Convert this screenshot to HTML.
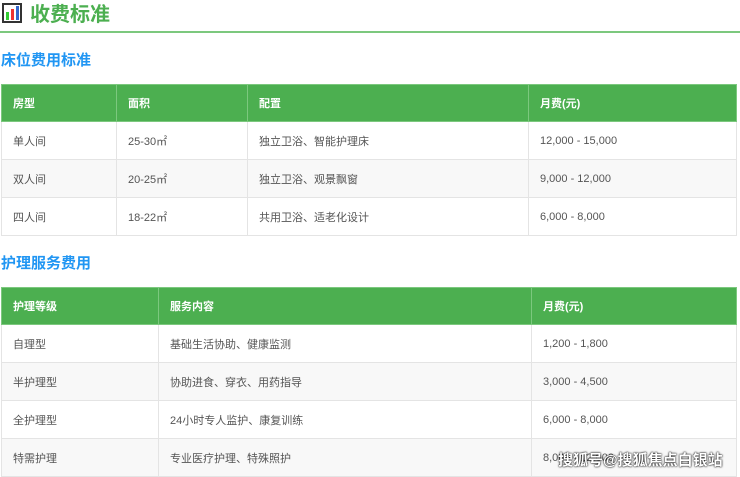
<!DOCTYPE html>
<html><head><meta charset="utf-8"><style>
*{margin:0;padding:0;box-sizing:border-box}
body{width:740px;height:476px;overflow:hidden;background:#fff;font-family:"Liberation Sans","Noto Sans CJK SC",sans-serif;color:#555;position:relative}
.title{position:absolute;left:2px;top:0;height:25px;display:flex;align-items:center;font-size:20px;font-weight:bold;color:#4caf50}
.icon{width:20px;height:20px;border:2px solid #333;background:#fff;margin-right:8px;position:relative}
.icon i{position:absolute;bottom:1px;width:3px}
.line{position:absolute;left:0;top:31px;width:740px;height:2px;background:#7cc87e}
h3{position:absolute;left:1px;font-size:15px;font-weight:bold;color:#2196f3}
table{position:absolute;left:1px;width:736px;border-collapse:collapse;font-size:11px}
td,th{border:1px solid #e4e4e4;padding-left:11px;text-align:left;height:38px}
th{background:#4caf50;color:#fff;font-weight:bold;height:37px;border-color:#7cc87e}
tr:nth-child(odd) td{background:#f8f8f8}
.wm{position:absolute;left:558px;top:449px;font-size:15px;color:#fff;font-weight:bold;text-shadow:0 0 2px #000,0 0 1px #000}
</style></head><body>
<div class="title"><div class="icon"><i style="left:2px;height:8px;background:#3c3"></i><i style="left:7px;height:11px;background:#e33"></i><i style="left:12px;height:14px;background:#36c"></i></div>收费标准</div>
<div class="line"></div>
<h3 style="top:49px">床位费用标准</h3>
<table style="top:84px">
<tr><th style="width:115px">房型</th><th style="width:131px">面积</th><th style="width:281px">配置</th><th>月费(元)</th></tr>
<tr><td>单人间</td><td>25-30㎡</td><td>独立卫浴、智能护理床</td><td>12,000 - 15,000</td></tr>
<tr><td>双人间</td><td>20-25㎡</td><td>独立卫浴、观景飘窗</td><td>9,000 - 12,000</td></tr>
<tr><td>四人间</td><td>18-22㎡</td><td>共用卫浴、适老化设计</td><td>6,000 - 8,000</td></tr>
</table>
<h3 style="top:252px">护理服务费用</h3>
<table style="top:287px">
<tr><th style="width:157px">护理等级</th><th style="width:373px">服务内容</th><th>月费(元)</th></tr>
<tr><td>自理型</td><td>基础生活协助、健康监测</td><td>1,200 - 1,800</td></tr>
<tr><td>半护理型</td><td>协助进食、穿衣、用药指导</td><td>3,000 - 4,500</td></tr>
<tr><td>全护理型</td><td>24小时专人监护、康复训练</td><td>6,000 - 8,000</td></tr>
<tr><td>特需护理</td><td>专业医疗护理、特殊照护</td><td>8,000 - 12,000</td></tr>
</table>
<div class="wm">搜狐号@搜狐焦点白银站</div>
</body></html>
